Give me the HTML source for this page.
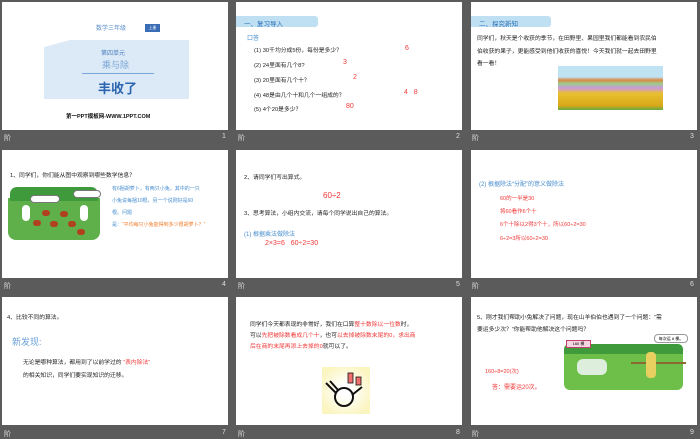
<!DOCTYPE html><html><head><meta charset="utf-8"><style>
*{margin:0;padding:0;box-sizing:border-box}
body{width:700px;height:438px;background:#5b5b5b;position:relative;overflow:hidden;font-family:"Liberation Sans","Noto Sans CJK SC",sans-serif}
.s{position:absolute;width:226px;height:128px;background:#fff;overflow:hidden}
.s div,.s span{position:absolute;white-space:nowrap}
.lb{position:absolute;color:#ddd;font-size:7px}
.t{font-size:5.8px;color:#222}
.r{color:#f03838}
.b{color:#4a8fd0}
.hd{background:#bfe0f3;color:#2a6fb5;font-size:6.5px;padding:2px 0 0 8px;height:11px;width:80px;border-radius:0 3px 3px 0}
</style></head><body>
<!-- row1 -->
<div class="s" style="left:2px;top:2px">
<div style="left:94px;top:21px;font-size:6px;color:#5b8fc9">数学三年级</div>
<div style="left:143px;top:22px;width:15px;height:8px;background:#3a6db5;color:#fff;font-size:4px;text-align:center;line-height:8px">上册</div>
<div style="left:42px;top:38px;width:145px;height:59px;background:#dce9f6;clip-path:polygon(18% 0,100% 0,100% 100%,0 100%,0 12%)"></div>
<div style="left:99px;top:46px;font-size:6px;color:#4a7fc0">第四单元</div>
<div style="left:100px;top:56px;font-size:9px;color:#7aa6d8">乘与除</div>
<div style="left:80px;top:71px;width:72px;height:1px;background:#7aa6d8"></div>
<div style="left:96px;top:76px;font-size:13px;color:#2d66b0;font-weight:bold">丰收了</div>
<div style="left:64px;top:110px;font-size:5.5px;color:#111;font-weight:bold">第一PPT模板网-WWW.1PPT.COM</div>
</div>
<div class="s" style="left:236px;top:2px">
<div class="hd" style="left:0;top:14px;width:82px">一、复习导入</div>
<div class="b" style="left:11px;top:31px;font-size:6px">口答</div>
<div class="t" style="left:18px;top:43px">(1) 30千均分成5份，每份是多少？</div><div class="r" style="left:169px;top:43px;font-size:7px">6</div>
<div class="t" style="left:18px;top:58px">(2) 24里面有几个8?</div><div class="r" style="left:107px;top:57px;font-size:7px">3</div>
<div class="t" style="left:18px;top:73px">(3) 20里面有几个十？</div><div class="r" style="left:117px;top:72px;font-size:7px">2</div>
<div class="t" style="left:18px;top:88px">(4) 48是由几个十和几个一组成的？</div><div class="r" style="left:168px;top:87px;font-size:7px">4&nbsp;&nbsp;&nbsp;8</div>
<div class="t" style="left:18px;top:102px">(5) 4个20是多少？</div><div class="r" style="left:110px;top:101px;font-size:7px">80</div>
</div>
<div class="s" style="left:471px;top:2px">
<div class="hd" style="left:0;top:14px;width:80px">二、探究新知</div>
<div class="t" style="left:6px;top:31px">同学们，秋天是个收获的季节，在田野里、果园里我们都能看到农民伯</div>
<div class="t" style="left:6px;top:44px">伯收获的果子，更能感受到他们收获的喜悦！今天我们就一起去田野里</div>
<div class="t" style="left:6px;top:56px">看一看！</div>
<div style="left:87px;top:64px;width:105px;height:44px;background:linear-gradient(#bfe3f2 0,#bfe3f2 25%,#d84 32%,#9c8 40%,#c9d 50%,#e8c030 62%,#d9a818 90%,#6a4 100%)"></div>
</div>
<div class="lb" style="left:4px;top:133px">阶</div><div class="lb" style="left:222px;top:133px">1</div>
<div class="lb" style="left:238px;top:133px">阶</div><div class="lb" style="left:456px;top:133px">2</div>
<div class="lb" style="left:472px;top:133px">阶</div><div class="lb" style="left:690px;top:133px">3</div>
<!-- row2 -->
<div class="s" style="left:2px;top:150px">
<div class="t" style="left:8px;top:20px">1、同学们，你们能从图中观察到哪些数学信息？</div>
<div style="left:6px;top:48px;width:92px;height:42px;background:#5fb04a;border-radius:0 0 8px 8px"></div>
<div style="left:8px;top:37px;width:88px;height:14px;background:#3e9a3a;border-radius:7px 7px 0 0"></div>
<div style="left:28px;top:45px;width:30px;height:8px;background:#fff;border:1px solid #777;border-radius:4px"></div>
<div style="left:71px;top:40px;width:28px;height:8px;background:#fff;border:1px solid #777;border-radius:4px"></div>
<div style="left:40px;top:60px;width:8px;height:6px;background:#b0401f;border-radius:3px"></div>
<div style="left:58px;top:61px;width:8px;height:6px;background:#b0401f;border-radius:3px"></div>
<div style="left:31px;top:70px;width:8px;height:6px;background:#b0401f;border-radius:3px"></div>
<div style="left:48px;top:71px;width:8px;height:6px;background:#b0401f;border-radius:3px"></div>
<div style="left:66px;top:71px;width:8px;height:6px;background:#b0401f;border-radius:3px"></div>
<div style="left:75px;top:79px;width:8px;height:6px;background:#b0401f;border-radius:3px"></div>
<div style="left:20px;top:55px;width:8px;height:16px;background:#fff;border-radius:4px"></div>
<div style="left:78px;top:55px;width:8px;height:16px;background:#fff;border-radius:4px"></div>
<div class="b" style="left:110px;top:33px;font-size:5px;line-height:12px;white-space:normal;width:90px">有6捆胡萝卜，有两只小兔，其中的一只小兔说每捆10根，另一个说刚好是60根。问题是：<span style="position:static;color:#f08030">“平均每只小兔能得到多少根胡萝卜？”</span></div>
</div>
<div class="s" style="left:236px;top:150px">
<div class="t" style="left:8px;top:22px">2、请同学们写出算式。</div>
<div class="r" style="left:87px;top:41px;font-size:8px">60÷2</div>
<div class="t" style="left:8px;top:58px">3、思考算法，小组内交流，请每个同学说出自己的算法。</div>
<div class="b" style="left:8px;top:79px;font-size:6px">(1) 根据乘法做除法</div>
<div class="r" style="left:29px;top:90px;font-size:7px">2×3=6&nbsp;&nbsp;&nbsp;60÷2=30</div>
</div>
<div class="s" style="left:471px;top:150px">
<div class="b" style="left:8px;top:29px;font-size:6px">(2) 根据除法“分配”的意义做除法</div>
<div class="r" style="left:29px;top:44px;font-size:5.5px">60的一半是30</div>
<div class="r" style="left:29px;top:57px;font-size:5.5px">将60看作6个十</div>
<div class="r" style="left:29px;top:70px;font-size:5.5px">6个十除以2得3个十，所以60÷2=30</div>
<div class="r" style="left:29px;top:84px;font-size:5.5px">6÷2=3所以60÷2=30</div>
</div>
<div class="lb" style="left:4px;top:281px">阶</div><div class="lb" style="left:222px;top:281px">4</div>
<div class="lb" style="left:238px;top:281px">阶</div><div class="lb" style="left:456px;top:281px">5</div>
<div class="lb" style="left:472px;top:281px">阶</div><div class="lb" style="left:690px;top:281px">6</div>
<!-- row3 -->
<div class="s" style="left:2px;top:297px">
<div class="t" style="left:5px;top:15px">4、比较不同的算法。</div>
<div class="b" style="left:10px;top:38px;font-size:9px;color:#6a9fd6">新发现:</div>
<div class="t" style="left:21px;top:60px">无论是哪种算法，都用到了以前学过的 <span class="r" style="position:static">“表内除法”</span></div>
<div class="t" style="left:21px;top:73px">的相关知识，同学们要实现知识的迁移。</div>
</div>
<div class="s" style="left:236px;top:297px">
<div class="t" style="left:14px;top:22px">同学们今天都表现的非常好，我们在口算<span class="r" style="position:static">整十数除以一位数</span>时，</div>
<div class="t" style="left:14px;top:33px">可以<span class="r" style="position:static">先把被除数看成几个十</span>，也可<span class="r" style="position:static">以去掉被除数末尾的0，求出商</span></div>
<div class="t r" style="left:14px;top:44px">后在商的末尾再添上去掉的0<span style="position:static;color:#222">就可以了。</span></div>
<div style="left:86px;top:70px;width:48px;height:47px;background:radial-gradient(#fff 20%,#fbf5c0 80%)">
<svg width="48" height="47" viewBox="0 0 48 47"><g fill="none" stroke="#111" stroke-width="2"><circle cx="22" cy="30" r="9"/><path d="M14 26 L4 16 M16 23 L8 14 M30 28 L40 20"/></g><rect x="26" y="6" width="5" height="10" fill="#f07070" stroke="#111" stroke-width=".8"/><rect x="34" y="10" width="5" height="8" fill="#f07070" stroke="#111" stroke-width=".8"/></svg></div>
</div>
<div class="s" style="left:471px;top:297px">
<div class="t" style="left:6px;top:15px">5、刚才我们帮助小兔解决了问题，现在山羊伯伯也遇到了一个问题：“需</div>
<div class="t" style="left:6px;top:27px">要运多少次？”你能帮助他解决这个问题吗？</div>
<div style="left:93px;top:52px;width:119px;height:41px;background:#6dbf4a;border-radius:3px 3px 6px 6px"></div>
<div style="left:93px;top:47px;width:119px;height:10px;background:#3e9a3a;border-radius:5px 5px 0 0"></div>
<div style="left:95px;top:43px;width:25px;height:8px;background:#f6d6e0;border:1px solid #c04070;font-size:4px;text-align:center;line-height:6px">160 棵</div>
<div style="left:183px;top:37px;width:34px;height:9px;background:#fff;border:1px solid #999;border-radius:4px;font-size:4px;text-align:center;line-height:7px">每次运 8 棵。</div>
<div style="left:106px;top:62px;width:30px;height:16px;background:#ddeedd;border-radius:6px"></div>
<div style="left:160px;top:65px;width:55px;height:2px;background:#8a6a30"></div>
<div style="left:175px;top:55px;width:10px;height:26px;background:#e8d060;border-radius:4px"></div>
<div class="r" style="left:14px;top:70px;font-size:5.5px">160÷8=20(次)</div>
<div class="r" style="left:21px;top:85px;font-size:6px">答：需要运20次。</div>
</div>
<div class="lb" style="left:4px;top:429px">阶</div><div class="lb" style="left:222px;top:429px">7</div>
<div class="lb" style="left:238px;top:429px">阶</div><div class="lb" style="left:456px;top:429px">8</div>
<div class="lb" style="left:472px;top:429px">阶</div><div class="lb" style="left:690px;top:429px">9</div>
</body></html>
